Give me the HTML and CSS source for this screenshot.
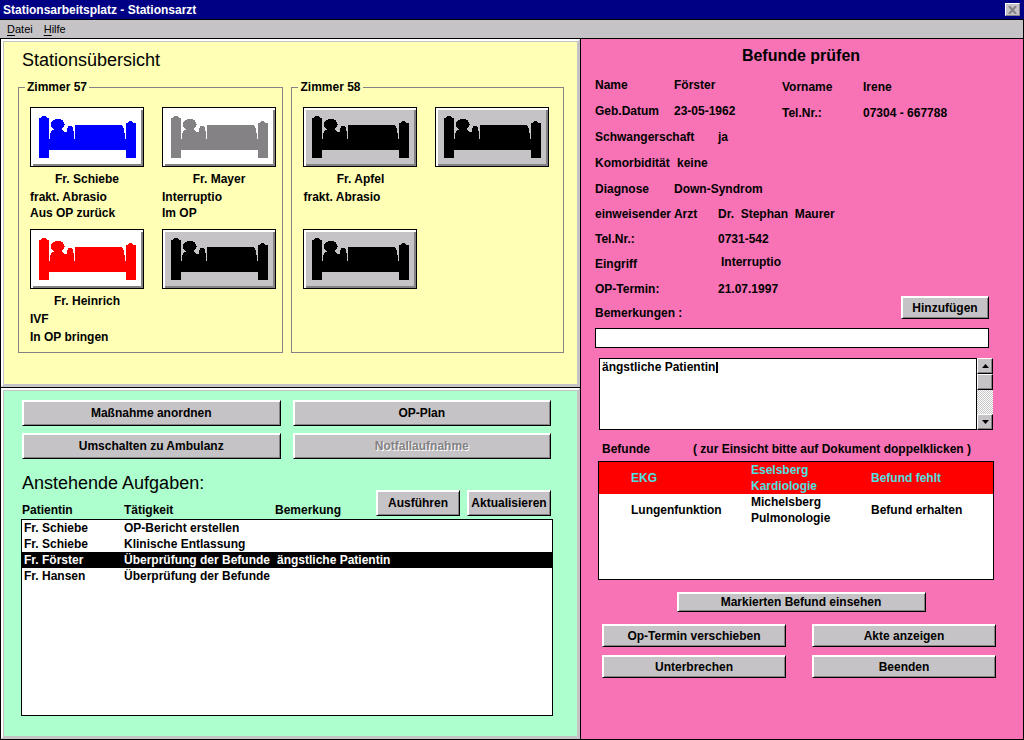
FILE: index.html
```html
<!DOCTYPE html>
<html lang="de">
<head>
<meta charset="utf-8">
<title>Stationsarbeitsplatz - Stationsarzt</title>
<link rel="stylesheet" href="styles.css">
</head>
<body>
<svg class="defs" aria-hidden="true">
  <symbol id="bed" viewBox="42 54 291 126">
    <path d="M42 180V60h5l7-6h8l7 6h3v120z"/>
    <ellipse cx="98" cy="79" rx="21" ry="16"/>
    <path d="M75 126V106l5-7 8-5h21l6 5 6 4h6V90l4-6h9l5 6 2 36z"/>
    <path d="M151 126V81h136l7 3 4 12 2 30z"/>
    <path d="M71 122h234v33H71z"/>
    <path d="M303 180V75h5l6-5h7l6 5h6v105z"/>
  </symbol>
</svg>

<header class="titlebar">
  <h1 class="titlebar-text">Stationsarbeitsplatz - Stationsarzt</h1>
  <button class="close" type="button" aria-label="Schließen"><svg viewBox="0 0 9 8" width="9" height="8"><path d="M1 0l7 8M8 0l-7 8"/></svg></button>
</header>
<nav class="menubar">
  <button class="menu" type="button"><u>D</u>atei</button>
  <button class="menu" type="button"><u>H</u>ilfe</button>
</nav>

<main class="workspace">
  <div class="left">
    <section class="panel overview">
      <h2 class="heading">Stationsübersicht</h2>
      <div class="rooms">
        <fieldset class="room">
          <legend>Zimmer 57</legend>
          <div class="beds">
            <div class="place">
              <button class="bed bed-white bed-blue" type="button" aria-label="Bett Fr. Schiebe"><svg><use href="#bed"/></svg></button>
              <p class="patient">Fr. Schiebe</p>
              <p>frakt. Abrasio</p>
              <p>Aus OP zurück</p>
            </div>
            <div class="place">
              <button class="bed bed-white bed-gray" type="button" aria-label="Bett Fr. Mayer"><svg><use href="#bed"/></svg></button>
              <p class="patient">Fr. Mayer</p>
              <p>Interruptio</p>
              <p>Im OP</p>
            </div>
            <div class="place">
              <button class="bed bed-white bed-red" type="button" aria-label="Bett Fr. Heinrich"><svg><use href="#bed"/></svg></button>
              <p class="patient">Fr. Heinrich</p>
              <p>IVF</p>
              <p class="spaced">In OP bringen</p>
            </div>
            <div class="place">
              <button class="bed" type="button" aria-label="Freies Bett"><svg><use href="#bed"/></svg></button>
            </div>
          </div>
        </fieldset>
        <fieldset class="room">
          <legend>Zimmer 58</legend>
          <div class="beds">
            <div class="place">
              <button class="bed" type="button" aria-label="Bett Fr. Apfel"><svg><use href="#bed"/></svg></button>
              <p class="patient">Fr. Apfel</p>
              <p>frakt. Abrasio</p>
            </div>
            <div class="place">
              <button class="bed" type="button" aria-label="Freies Bett"><svg><use href="#bed"/></svg></button>
            </div>
            <div class="place">
              <button class="bed" type="button" aria-label="Freies Bett"><svg><use href="#bed"/></svg></button>
            </div>
          </div>
        </fieldset>
      </div>
    </section>

    <section class="panel tasks">
      <div class="actions">
        <button class="btn btn-tall" type="button">Maßnahme anordnen</button>
        <button class="btn btn-tall" type="button">OP-Plan</button>
        <button class="btn btn-tall" type="button">Umschalten zu Ambulanz</button>
        <button class="btn btn-tall" type="button" disabled>Notfallaufnahme</button>
      </div>
      <div class="task-head">
        <div class="task-titles">
          <h2 class="heading">Anstehende Aufgaben:</h2>
          <div class="task-labels"><span>Patientin</span><span>Tätigkeit</span><span>Bemerkung</span></div>
        </div>
        <div class="task-buttons">
          <button class="btn btn-tall" type="button">Ausführen</button>
          <button class="btn btn-tall" type="button">Aktualisieren</button>
        </div>
      </div>
      <div class="list task-list">
        <table class="task-table">
          <colgroup><col class="col-patient"><col class="col-task"><col></colgroup>
          <tbody>
            <tr><td>Fr. Schiebe</td><td>OP-Bericht erstellen</td><td></td></tr>
            <tr><td>Fr. Schiebe</td><td>Klinische Entlassung</td><td></td></tr>
            <tr class="selected"><td>Fr. Förster</td><td>Überprüfung der Befunde</td><td>ängstliche Patientin</td></tr>
            <tr><td>Fr. Hansen</td><td>Überprüfung der Befunde</td><td></td></tr>
          </tbody>
        </table>
      </div>
    </section>
  </div>

  <section class="findings">
    <h2 class="findings-title">Befunde prüfen</h2>
    <div class="person">
      <dl class="facts">
        <div><dt>Name</dt><dd>Förster</dd></div>
        <div><dt>Geb.Datum</dt><dd>23-05-1962</dd></div>
        <div class="wide"><dt>Schwangerschaft</dt><dd>ja</dd></div>
        <div><dt>Komorbidität</dt><dd class="inset">keine</dd></div>
        <div><dt>Diagnose</dt><dd>Down-Syndrom</dd></div>
      </dl>
      <dl class="facts facts-second">
        <div><dt>Vorname</dt><dd>Irene</dd></div>
        <div><dt>Tel.Nr.:</dt><dd>07304 - 667788</dd></div>
      </dl>
    </div>
    <div class="referral">
      <div>
        <dl class="facts facts-dense">
          <div class="wide"><dt>einweisender Arzt</dt><dd>Dr.&nbsp; Stephan&nbsp; Maurer</dd></div>
          <div class="wide"><dt>Tel.Nr.:</dt><dd>0731-542</dd></div>
          <div class="wide"><dt>Eingriff</dt><dd class="inset raised">Interruptio</dd></div>
          <div class="wide"><dt>OP-Termin:</dt><dd>21.07.1997</dd></div>
        </dl>
        <label class="remark-label" for="remark">Bemerkungen :</label>
      </div>
      <button class="btn btn-add" type="button">Hinzufügen</button>
    </div>
    <input class="remark" id="remark" type="text">
    <div class="memo">
      <textarea class="memo-text" aria-label="Bemerkungstext">ängstliche Patientin</textarea>
      <span class="caret"></span>
      <div class="scrollbar">
        <button class="scroll-part" type="button" aria-label="Nach oben"><svg viewBox="0 0 7 4" width="7" height="4"><path d="M0 4h7L3.5 0z"/></svg></button>
        <div class="scroll-part"></div>
        <button class="scroll-part scroll-down" type="button" aria-label="Nach unten"><svg viewBox="0 0 7 4" width="7" height="4"><path d="M0 0h7L3.5 4z"/></svg></button>
      </div>
    </div>
    <div class="result-head"><span>Befunde</span><span>( zur Einsicht bitte auf Dokument doppelklicken )</span></div>
    <div class="list result-list">
      <table class="result-table">
        <colgroup><col class="col-doc"><col class="col-place"><col></colgroup>
        <tbody>
          <tr class="missing"><td>EKG</td><td>Eselsberg<br>Kardiologie</td><td>Befund fehlt</td></tr>
          <tr><td>Lungenfunktion</td><td>Michelsberg<br>Pulmonologie</td><td>Befund erhalten</td></tr>
        </tbody>
      </table>
    </div>
    <div class="result-open"><button class="btn btn-open" type="button">Markierten Befund einsehen</button></div>
    <div class="result-actions">
      <button class="btn btn-mid" type="button">Op-Termin verschieben</button>
      <button class="btn btn-mid" type="button">Akte anzeigen</button>
      <button class="btn btn-mid" type="button">Unterbrechen</button>
      <button class="btn btn-mid" type="button">Beenden</button>
    </div>
  </section>
</main>
</body>
</html>
```
FILE: styles.css
```css
* { box-sizing: border-box; }

body {
  margin: 0;
  min-height: 100vh;
  display: flex;
  flex-direction: column;
  background: #000;
  color: #000;
  font: bold 12px/16px "Liberation Sans", Arial, sans-serif;
}

h1, h2, p, dl, dd { margin: 0; }
button, input, textarea { font: inherit; color: inherit; }
button { padding: 0; }
.defs { position: absolute; width: 0; height: 0; }

/* Window frame */
.titlebar {
  display: flex;
  align-items: center;
  justify-content: space-between;
  height: 20px;
  padding: 0 4px 0 3px;
  border-bottom: 1px solid #000;
  background: #000084;
  color: #fff;
}
.titlebar-text { font-size: 12px; }
.close {
  display: grid;
  place-items: center;
  width: 15px;
  height: 13px;
  border: 1px solid;
  border-color: #fff #848284 #848284 #fff;
  background: #c6c3c6;
}
.close path { stroke: #848284; stroke-width: 2; }
.menubar {
  display: flex;
  gap: 11px;
  height: 19px;
  margin-right: 1px;
  padding-left: 7px;
  border-bottom: 1px solid #000;
  background: #c6c3c6;
}
.menu {
  border: 0;
  background: none;
  font-weight: normal;
  font-size: 11px;
}
.menu u { text-underline-offset: 2px; }

.workspace {
  flex: 1;
  display: grid;
  grid-template-columns: 579fr 442fr;
  gap: 1px;
  padding: 0 1px 1px;
}
.left { display: flex; flex-direction: column; gap: 1px; min-width: 0; }
.panel {
  border: 2px solid;
  border-color: #fff #c6c3c6 #c6c3c6 #fff;
  outline: 1px solid #c6c3c6;
  outline-offset: -3px;
}
.heading { font-weight: normal; font-size: 18px; line-height: 24px; }

/* Ward overview */
.overview { padding: 7px 14px 32px 15px; background: #ffffb5; }
.overview .heading { padding-left: 4px; }
.rooms {
  display: grid;
  grid-template-columns: 265fr 272fr;
  gap: 8px;
  margin-top: 7px;
}
.room {
  min-width: 0;
  margin: 0;
  padding: 12px 0 7px 11px;
  border: 1px solid #848284;
}
.room legend { margin-left: -5px; padding: 0 2px; }
.beds {
  display: grid;
  grid-template-columns: 114px 114px;
  column-gap: 18px;
  row-gap: 8px;
}
.place { min-height: 114px; }
.patient { margin: 4px 0 2px; text-align: center; }
.spaced { margin-top: 2px; }
.bed {
  display: grid;
  place-items: center;
  width: 114px;
  height: 60px;
  border: 1px solid #000;
  background: #c6c3c6;
  box-shadow: inset 2px 2px #fff, inset -2px -2px #848284;
  color: #000;
}
.bed svg { width: 97px; height: 42px; fill: currentColor; shape-rendering: crispEdges; }
.bed-white { background: #fff; }
.bed-blue { color: #00f; }
.bed-gray { color: #848284; }
.bed-red { color: #f00; }

/* Buttons */
.btn {
  border: 1px solid;
  border-color: #fff #000 #000 #fff;
  background: #c6c3c6;
  box-shadow: inset 1px 1px #fff, inset -1px -1px #848284;
}
.btn-tall { height: 26px; }
.btn-mid { height: 23px; }
.btn:disabled { color: #848284; text-shadow: 1px 1px #fff; }

.list { border: 1px solid #000; background: #fff; }
table { width: 100%; border-collapse: collapse; table-layout: fixed; }
td { padding: 0; white-space: nowrap; }

/* Tasks */
.tasks {
  flex: 1;
  display: flex;
  flex-direction: column;
  padding: 10px 25px 21px 18px;
  background: #adffce;
}
.actions {
  display: grid;
  grid-template-columns: 1fr 1fr;
  gap: 7px 12px;
  margin: 0 2px 0 1px;
}
.task-head {
  display: flex;
  justify-content: space-between;
  margin-top: 12px;
  padding: 0 2px 1px 1px;
}
.task-labels {
  display: grid;
  grid-template-columns: 102px 151px auto;
  margin-top: 7px;
}
.task-buttons {
  display: grid;
  grid-template-columns: 84px 84px;
  gap: 7px;
  align-items: end;
  padding-bottom: 2px;
}
.task-list { flex: 1; }
.col-patient { width: 102px; }
.col-task { width: 153px; }
.task-table td:first-child { padding-left: 2px; }
.selected { background: #000; color: #fff; }

/* Findings */
.findings { padding: 5px 34px 20px 14px; background: #f773b5; }
.findings-title { font-size: 16px; line-height: 24px; text-align: center; padding-left: 18px; }
.person { display: grid; grid-template-columns: 187px auto; margin-top: 4px; }
.facts > div { display: grid; grid-template-columns: 79px auto; line-height: 26px; }
.facts > .wide { grid-template-columns: 123px auto; }
.facts dd { white-space: nowrap; }
.facts-second { padding-top: 2px; }
.facts-second > div { grid-template-columns: 81px auto; }
.facts-dense > div { line-height: 25px; }
.facts .inset { padding-left: 3px; }
.facts .raised { line-height: 20px; }
.referral { display: flex; justify-content: space-between; align-items: end; }
.remark-label { display: block; line-height: 22px; padding-bottom: 4px; }
.btn-add { width: 88px; height: 23px; margin-bottom: 9px; }
.remark {
  display: block;
  width: 100%;
  height: 20px;
  padding: 0 3px;
  border: 1px solid #000;
  background: #fff;
}
.memo {
  position: relative;
  display: flex;
  height: 72px;
  margin: 10px -4px 0 4px;
}
.memo-text {
  flex: 1;
  min-width: 0;
  padding: 0 2px;
  border: 1px solid #000;
  border-radius: 0;
  background: #fff;
  outline: 0;
  resize: none;
}
.caret {
  position: absolute;
  left: 117px;
  top: 4px;
  width: 2px;
  height: 11px;
  background: #000;
}
.scrollbar {
  display: flex;
  flex-direction: column;
  width: 16px;
  background: repeating-conic-gradient(#c6c3c6 0 25%, #fff 0 50%) 0 0 / 2px 2px;
}
.scroll-part {
  display: grid;
  place-items: center;
  height: 16px;
  border: 1px solid;
  border-color: #fff #000 #000 #fff;
  background: #c6c3c6;
  box-shadow: inset -1px -1px #848284;
}
.scroll-down { margin-top: auto; }
.result-head {
  display: grid;
  grid-template-columns: 91px auto;
  padding: 11px 0 4px 7px;
  white-space: nowrap;
}
.result-list { height: 119px; margin: 0 -5px 0 3px; }
.col-doc { width: 152px; }
.col-place { width: 120px; }
.result-table td:first-child { padding-left: 32px; }
.missing { background: #f00; color: #4de0e0; }
.result-open { display: flex; justify-content: center; padding: 12px 0 12px 18px; }
.btn-open { width: 249px; height: 20px; }
.result-actions {
  display: grid;
  grid-template-columns: 1fr 1fr;
  gap: 8px 26px;
  margin: 0 -7px 0 7px;
}
```
